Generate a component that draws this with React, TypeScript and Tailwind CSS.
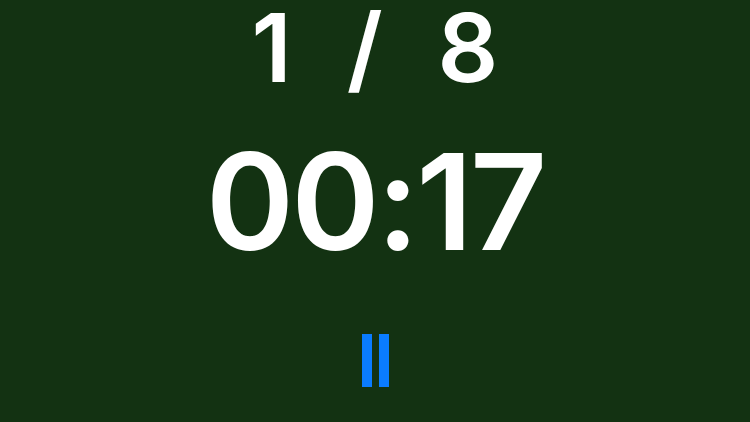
import React from 'react';

const App: React.FC = () => {
  return (
    <div className="w-[750px] h-[422px] bg-[#133212] flex flex-col items-center overflow-hidden" style={{ fontFamily: 'Inter, "Noto Sans", sans-serif' }}>
      <div className="text-white text-[95px] leading-[96px] font-semibold whitespace-pre [word-spacing:31px]">1 / 8</div>
      <div className="mt-[38px] text-white text-[134px] leading-[134px] font-semibold tracking-[-3px]">00:17</div>
      <button className="mt-[66px] flex gap-[7px]" aria-label="Pause">
        <span className="block w-[10px] h-[53px] bg-[#0a7cff]" />
        <span className="block w-[10px] h-[53px] bg-[#0a7cff]" />
      </button>
    </div>
  );
};

export default App;
